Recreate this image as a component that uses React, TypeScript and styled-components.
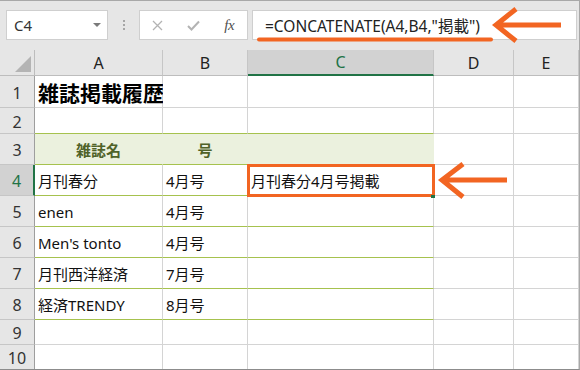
import React from "react";
import styled, { createGlobalStyle, css } from "styled-components";

const GlobalStyle = createGlobalStyle`
  html, body {
    margin: 0;
    padding: 0;
    background: #ffffff;
  }
  * {
    box-sizing: border-box;
  }
`;

const ORANGE = "#f26522";
const EXCEL_GREEN = "#217346";
const TABLE_LINE = "#a6c24e";
const GRID_LINE = "#d4d4d4";
const FONT = `"Noto Sans", "Noto Sans CJK JP", sans-serif`;

const Frame = styled.div`
  position: relative;
  width: 580px;
  height: 370px;
  overflow: hidden;
  background: #e6e6e6;
  border-top: 1px solid #a8a8a8;
  border-right: 1px solid #a8a8a8;
  border-bottom: 1px solid #8c8c8c;
  font-family: ${FONT};
`;

const Toolbar = styled.div`
  display: flex;
  align-items: flex-start;
  height: 49px;
  padding: 9px 2px 0 6px;
`;

const NameBox = styled.div`
  display: flex;
  align-items: center;
  justify-content: space-between;
  width: 102px;
  height: 30px;
  padding: 0 6px 0 7px;
  background: #ffffff;
  border: 1px solid #cfcfcf;
  color: #333333;
  font-size: 15px;
`;

const DropTriangle = styled.span`
  width: 0;
  height: 0;
  border-left: 4px solid transparent;
  border-right: 4px solid transparent;
  border-top: 4px solid #7a7a7a;
`;

const Grip = styled.div`
  display: flex;
  flex-direction: column;
  align-items: center;
  justify-content: center;
  gap: 2px;
  width: 31px;
  height: 30px;
`;

const GripDot = styled.span`
  width: 2px;
  height: 2px;
  background: #a6a6a6;
`;

const FormulaButtons = styled.div`
  display: flex;
  align-items: center;
  width: 109px;
  height: 30px;
  margin-right: 4px;
  background: #ffffff;
  border: 1px solid #cfcfcf;
`;

const IconSlot = styled.div`
  display: flex;
  align-items: center;
  justify-content: center;
  width: 36px;
  height: 100%;
`;

const FxLabel = styled.span`
  font-family: "Liberation Serif", "DejaVu Serif", serif;
  font-style: italic;
  font-size: 15px;
  color: #505050;
  letter-spacing: -0.5px;
`;

const FormulaInput = styled.div`
  flex: 1;
  display: flex;
  align-items: center;
  height: 30px;
  padding-left: 12px;
  background: #ffffff;
  border: 1px solid #cfcfcf;
  color: #222222;
  font-size: 15.5px;
  white-space: nowrap;
`;

const Sheet = styled.div`
  display: grid;
  grid-template-columns: 35px 128px 85px 186px 80px 1fr;
  grid-template-rows: 26px 32px 26px 31px 31px 31px 31px 31px 31px 25px 25px;
  background: #ffffff;
`;

const Corner = styled.div`
  position: relative;
  background: #e6e6e6;
  border-right: 1px solid #bdbdbd;
  border-bottom: 1px solid #bdbdbd;

  &::after {
    content: "";
    position: absolute;
    right: 3px;
    bottom: 3px;
    width: 16px;
    height: 16px;
    background: #b4b4b4;
    clip-path: polygon(100% 0, 100% 100%, 0 100%);
  }
`;

const ColHeader = styled.div<{ $selected?: boolean }>`
  display: flex;
  align-items: center;
  justify-content: center;
  background: #e6e6e6;
  border-right: 1px solid #c6c6c6;
  border-bottom: 1px solid #bdbdbd;
  color: #222222;
  font-size: 16px;
  ${p =>
    p.$selected &&
    css`
      background: #d2d2d2;
      color: ${EXCEL_GREEN};
      border-bottom: 2px solid ${EXCEL_GREEN};
    `}
`;

const RowHeader = styled.div<{ $selected?: boolean }>`
  display: flex;
  align-items: center;
  justify-content: center;
  padding-top: 2px;
  background: #e6e6e6;
  border-right: 1px solid #9e9e9e;
  border-bottom: 1px solid #c6c6c6;
  color: #333333;
  font-size: 16px;
  ${p =>
    p.$selected &&
    css`
      background: #d2d2d2;
      color: ${EXCEL_GREEN};
      border-right: 2px solid ${EXCEL_GREEN};
    `}
`;

interface ICellProps {
  $fill?: string;
  $line?: string;
  $bold?: boolean;
  $color?: string;
  $center?: boolean;
  $size?: number;
  $active?: boolean;
}

const Cell = styled.div<ICellProps>`
  position: relative;
  display: flex;
  align-items: center;
  justify-content: ${p => (p.$center ? "center" : "flex-start")};
  padding: 1px 3px 0;
  background: ${p => p.$fill || "#ffffff"};
  border-right: 1px solid ${p => p.$fill || GRID_LINE};
  border-bottom: 1px solid ${p => p.$line || GRID_LINE};
  color: ${p => p.$color || "#111111"};
  font-size: ${p => p.$size || 15}px;
  font-weight: ${p => (p.$bold ? 700 : 400)};
  white-space: nowrap;
  overflow: visible;
  ${p =>
    p.$active &&
    css`
      z-index: 2;
      outline: 3px solid ${ORANGE};
      outline-offset: -2px;

      &::after {
        content: "";
        position: absolute;
        right: -2px;
        bottom: -3px;
        width: 4px;
        height: 3px;
        background: ${EXCEL_GREEN};
      }
    `}
`;

const Annotations = styled.svg`
  position: absolute;
  top: 0;
  left: 0;
  pointer-events: none;
`;

const HEADER_FILL = "#ebf1de";

type CellSpec = { text?: string; props?: ICellProps };

const tableLine = (cells: CellSpec[]): CellSpec[] =>
  cells.map((c, i) => (i < 3 ? { ...c, props: { ...c.props, $line: TABLE_LINE } } : c));

const rows: { num: number; cells: CellSpec[] }[] = [
  {
    num: 1,
    cells: [{ text: "雑誌掲載履歴", props: { $bold: true, $size: 21, $color: "#000000" } }, {}, {}, {}, {}],
  },
  { num: 2, cells: tableLine([{}, {}, {}, {}, {}]) },
  {
    num: 3,
    cells: tableLine([
      { text: "雑誌名", props: { $fill: HEADER_FILL, $bold: true, $center: true, $color: "#4f6228" } },
      { text: "号", props: { $fill: HEADER_FILL, $bold: true, $center: true, $color: "#4f6228" } },
      { props: { $fill: HEADER_FILL } },
      {},
      {},
    ]),
  },
  {
    num: 4,
    cells: tableLine([{ text: "月刊春分" }, { text: "4月号" }, { text: "月刊春分4月号掲載", props: { $active: true } }, {}, {}]),
  },
  { num: 5, cells: tableLine([{ text: "enen" }, { text: "4月号" }, {}, {}, {}]) },
  { num: 6, cells: tableLine([{ text: "Men's tonto" }, { text: "4月号" }, {}, {}, {}]) },
  { num: 7, cells: tableLine([{ text: "月刊西洋経済" }, { text: "7月号" }, {}, {}, {}]) },
  { num: 8, cells: tableLine([{ text: "経済TRENDY" }, { text: "8月号" }, {}, {}, {}]) },
  { num: 9, cells: [{}, {}, {}, {}, {}] },
  { num: 10, cells: [{}, {}, {}, {}, {}] },
];

const columns = ["A", "B", "C", "D", "E"];

export default function App() {
  return (
    <>
      <GlobalStyle />
      <Frame>
        <Toolbar>
          <NameBox>
            <span>C4</span>
            <DropTriangle />
          </NameBox>
          <Grip>
            <GripDot />
            <GripDot />
            <GripDot />
          </Grip>
          <FormulaButtons>
            <IconSlot>
              <svg width="11" height="11" viewBox="0 0 11 11">
                <path d="M1 1 L10 10 M10 1 L1 10" stroke="#b3b3b3" strokeWidth="1.3" fill="none" />
              </svg>
            </IconSlot>
            <IconSlot>
              <svg width="13" height="11" viewBox="0 0 13 11">
                <path d="M1 6 L4.5 9.5 L12 1.5" stroke="#b3b3b3" strokeWidth="2" fill="none" />
              </svg>
            </IconSlot>
            <IconSlot>
              <FxLabel>fx</FxLabel>
            </IconSlot>
          </FormulaButtons>
          <FormulaInput>=CONCATENATE(A4,B4,"掲載")</FormulaInput>
        </Toolbar>
        <Sheet>
          <Corner />
          {columns.map(c => (
            <ColHeader key={c} $selected={c === "C"}>
              {c}
            </ColHeader>
          ))}
          {rows.map(row => (
            <React.Fragment key={row.num}>
              <RowHeader $selected={row.num === 4}>{row.num}</RowHeader>
              {row.cells.map((cell, idx) => (
                <Cell key={idx} {...cell.props}>
                  {cell.text}
                </Cell>
              ))}
            </React.Fragment>
          ))}
        </Sheet>
        <Annotations width="580" height="370" viewBox="0 0 580 370">
          <line x1="259" y1="38.5" x2="491" y2="38.5" stroke={ORANGE} strokeWidth="4" strokeLinecap="round" />
          <path d="M516 8 L496 24 L516 40 M497 24 L561 24" stroke={ORANGE} strokeWidth="5" fill="none" />
          <path d="M463 163 L442 179 L463 196 M443 179 L507 179" stroke={ORANGE} strokeWidth="5" fill="none" />
        </Annotations>
      </Frame>
    </>
  );
}
